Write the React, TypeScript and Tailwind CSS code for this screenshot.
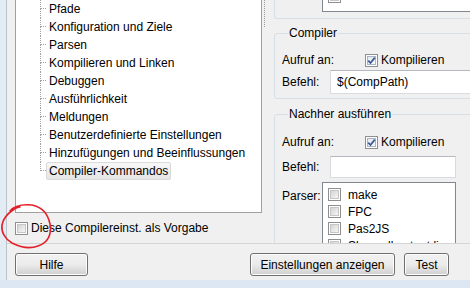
import React from "react";

const treeItems = [
  "Pfade",
  "Konfiguration und Ziele",
  "Parsen",
  "Kompilieren und Linken",
  "Debuggen",
  "Ausführlichkeit",
  "Meldungen",
  "Benutzerdefinierte Einstellungen",
  "Hinzufügungen und Beeinflussungen",
  "Compiler-Kommandos",
];

const parserItems = ["make", "FPC", "Pas2JS", "Show all output lines"];

function CheckBox({ checked }: { checked?: boolean }) {
  return (
    <span className="flex h-[13px] w-[13px] shrink-0 items-center justify-center border border-[#8f8f8f] bg-white">
      <span
        className={`relative flex h-[9px] w-[9px] items-center justify-center border ${
          checked
            ? "border-[#a8b4c8] bg-gradient-to-br from-[#e4e9f2] to-[#f7f9fc]"
            : "border-[#c6c6c6] bg-gradient-to-br from-[#d4d4d4] to-[#f6f6f6]"
        }`}
      >
        {checked && (
          <svg width="9" height="9" viewBox="0 0 9 9" className="shrink-0">
            <path
              d="M1.2 4.6 L3.5 7 L7.8 1.6"
              fill="none"
              stroke="#3c5a94"
              strokeWidth="1.8"
            />
          </svg>
        )}
      </span>
    </span>
  );
}

function Button({ label, width }: { label: string; width: string }) {
  return (
    <div
      className={`${width} flex h-[23px] items-center justify-center whitespace-nowrap rounded-[3px] border border-[#707070] bg-gradient-to-b from-[#f2f2f2] via-[#ebebeb] to-[#cfcfcf] text-[12px] text-black shadow-[inset_0_0_0_1px_#fcfcfc]`}
    >
      {label}
    </div>
  );
}

function TreeRow({ label, last }: { label: string; last: boolean }) {
  return (
    <div className="flex h-[18px] items-stretch">
      <div className="ml-[24px] flex w-[6px] flex-col">
        <div className="h-[9px] border-b border-l border-dotted border-[#a0a0a0]" />
        {!last && <div className="h-[9px] border-l border-dotted border-[#a0a0a0]" />}
      </div>
      <span
        className={`flex items-center rounded-[2px] border px-[2px] leading-none whitespace-nowrap ${
          last
            ? "border-[#d9d9d9] bg-gradient-to-b from-[#f8f8f8] to-[#e5e5e5]"
            : "border-transparent"
        }`}
      >
        {label}
      </span>
    </div>
  );
}

export default function App() {
  return (
    <div className="relative flex h-[288px] w-[470px] flex-col overflow-hidden bg-[#f0f0f0] font-['Liberation_Sans',Arial,sans-serif] text-[12px] text-black">
      <div className="flex min-h-0 flex-1">
        <div className="w-[7px] shrink-0 border-r border-[#b9c3cc] bg-[#e3ebf3]" />
        <div className="flex min-w-0 flex-1 flex-col">
          {/* upper area: tree + options */}
          <div className="flex h-[243px] shrink-0">
            {/* left column */}
            <div className="flex w-[255px] shrink-0 flex-col pl-[8px]">
              <div className="h-[213px] overflow-hidden border-b border-l border-r border-[#a0a0a0] bg-white">
                {treeItems.map((t, i) => (
                  <TreeRow key={t} label={t} last={i === treeItems.length - 1} />
                ))}
              </div>
              <div className="flex flex-1 items-center gap-[3px]">
                <CheckBox />
                <span>Diese Compilereinst. als Vorgabe</span>
              </div>
            </div>
            {/* splitter */}
            <div className="w-[12px] shrink-0 pl-[2px]">
              <div className="h-[27px] w-0 border-l border-dotted border-[#9a9a9a]" />
            </div>
            {/* right scroll area */}
            <div className="flex min-w-0 flex-1 flex-col overflow-hidden">
              {/* end of previous group */}
              <div className="h-[19px] w-[240px] shrink-0 rounded-bl-[3px] border-b border-l border-[#d5dfe5] pl-[47px]">
                <div className="h-[12px] overflow-hidden border-b border-l border-r border-[#828790] bg-white pl-[5px]">
                  <div className="-mt-[10px]">
                    <CheckBox />
                  </div>
                </div>
              </div>
              {/* Compiler group */}
              <fieldset className="mt-[7px] h-[73px] w-[240px] shrink-0 rounded-[3px] border border-[#d5dfe5] pl-[7px]">
                <legend className="ml-[6px] px-[1px] leading-[14px]">Compiler</legend>
                <div className="mt-[13px] flex h-[14px] items-center">
                  <span className="w-[83px]">Aufruf an:</span>
                  <CheckBox checked />
                  <span className="ml-[3px]">Kompilieren</span>
                </div>
                <div className="mt-[3px] flex items-center">
                  <span className="w-[48px]">Befehl:</span>
                  <div className="flex h-[24px] flex-1 items-center border border-[#d9dbe0] border-t-[#b5b8c0] bg-white pl-[6px]">
                    $(CompPath)
                  </div>
                </div>
              </fieldset>
              {/* Nachher ausführen group */}
              <fieldset className="mt-[8px] h-[150px] w-[240px] shrink-0 rounded-[3px] border border-[#d5dfe5] pl-[7px]">
                <legend className="ml-[6px] px-[1px] leading-[14px]">Nachher ausführen</legend>
                <div className="mt-[14px] flex h-[14px] items-center">
                  <span className="w-[83px]">Aufruf an:</span>
                  <CheckBox checked />
                  <span className="ml-[3px]">Kompilieren</span>
                </div>
                <div className="mt-[7px] flex items-center">
                  <span className="w-[48px]">Befehl:</span>
                  <div className="h-[22px] w-[126px] border border-[#d9dbe0] border-t-[#b5b8c0] bg-white" />
                </div>
                <div className="mt-[4px] flex items-start">
                  <span className="mt-[5px] w-[40px]">Parser:</span>
                  <div className="h-[80px] w-[134px] border border-[#828790] bg-white pl-[5px] pt-[3px]">
                    {parserItems.map((p) => (
                      <div key={p} className="flex h-[17px] items-center gap-[7px] whitespace-nowrap">
                        <CheckBox />
                        <span>{p}</span>
                      </div>
                    ))}
                  </div>
                </div>
              </fieldset>
            </div>
          </div>
          {/* buttons */}
          <div className="flex flex-1 items-start border-t border-[#d5d5d5] pl-[8px] pt-[9px]">
            <Button label="Hilfe" width="w-[73px]" />
            <div className="ml-[162px]">
              <Button label="Einstellungen anzeigen" width="w-[145px]" />
            </div>
            <div className="ml-[9px]">
              <Button label="Test" width="w-[45px]" />
            </div>
          </div>
        </div>
      </div>
      <div className="h-[8px] shrink-0 bg-[#dde7f3]" />
      {/* red hand-drawn annotation */}
      <svg
        className="pointer-events-none absolute left-0 top-[200px]"
        width="60"
        height="52"
        viewBox="0 200 60 52"
      >
        <path
          d="M10 211 C14 206, 22 204, 32 205 C42 207, 48 214, 50 224 C52 234, 48 243, 38 246 C30 249, 20 247, 12 243 C5 239, 1 232, 2 225 C3 219, 7 214, 13 210 C16 208, 18 207, 20 207"
          fill="none"
          stroke="#e4202a"
          strokeWidth="1.6"
          strokeLinecap="round"
        />
      </svg>
    </div>
  );
}
